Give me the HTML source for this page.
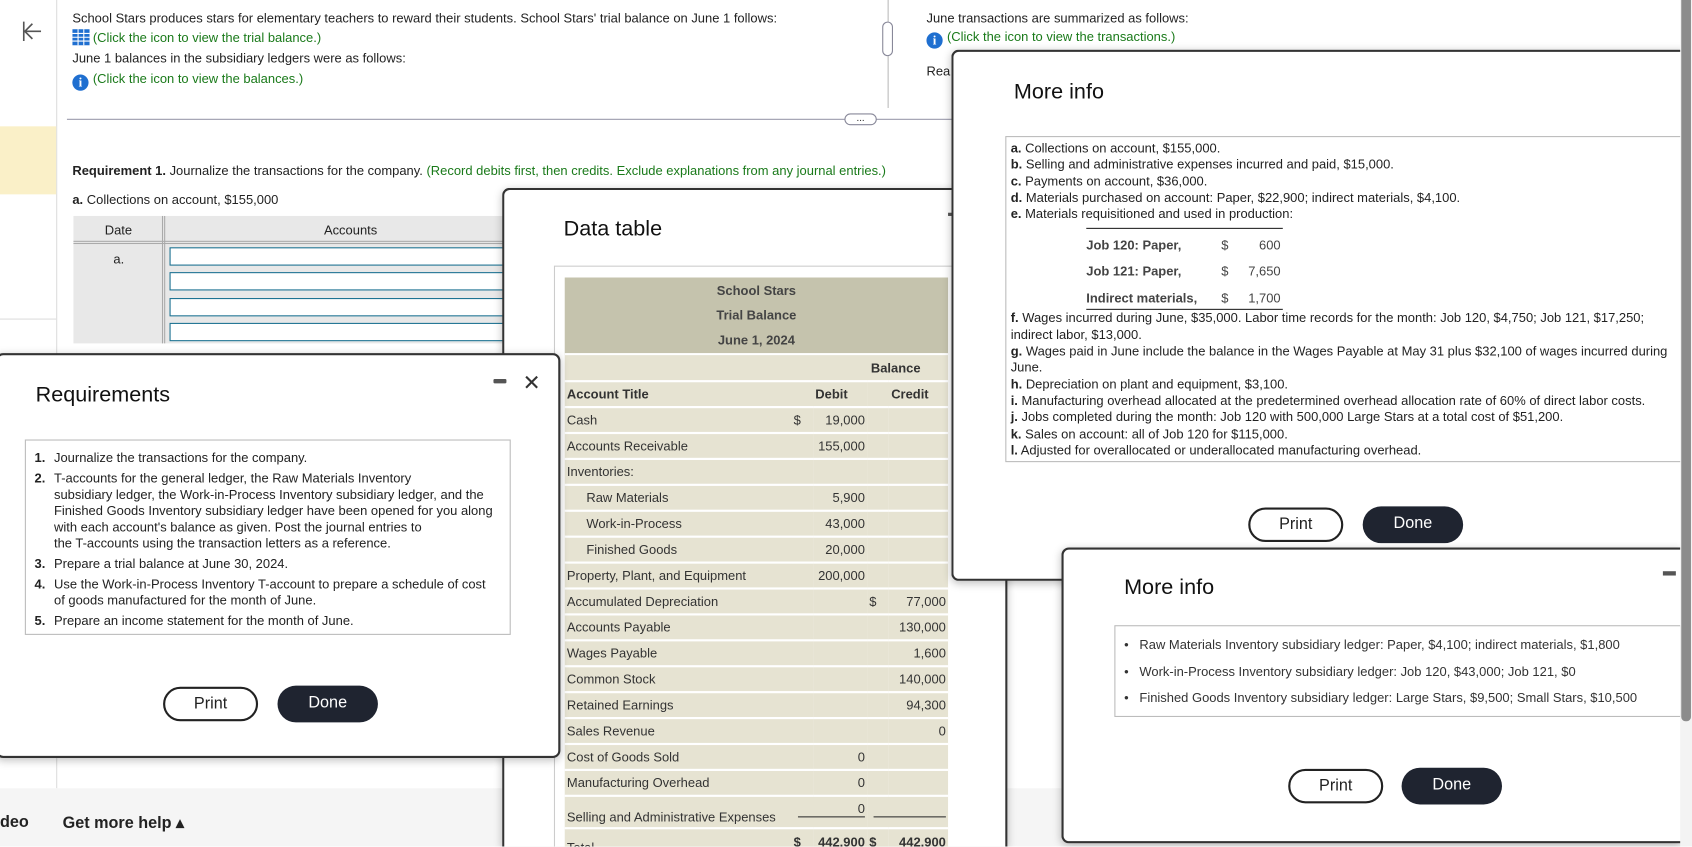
<!DOCTYPE html>
<html><head><meta charset="utf-8"><style>
*{box-sizing:border-box;margin:0;padding:0}
html,body{width:1692px;height:846px;overflow:hidden;background:#fff;font-family:"Liberation Sans",sans-serif;color:#222}
#w{position:absolute;left:0;top:0;width:1567px;height:784px;overflow:hidden;transform:scale(1.0798);transform-origin:0 0}
.a{position:absolute}
.t{font-size:12px;white-space:nowrap}
.g{color:#1a7a1a}
.pop{position:absolute;background:#fff;border:2px solid #333;border-radius:7px;box-shadow:0 2px 8px rgba(0,0,0,.25)}
.h{font-size:20px;color:#111}
.btnp{position:absolute;border:2px solid #222;border-radius:17px;text-align:center;font-size:15px;line-height:28px;color:#222;background:#fff}
.btnd{position:absolute;background:#1f2430;border-radius:17px;text-align:center;font-size:15px;line-height:32px;color:#fff}
.ico{display:inline-block;width:15px;height:15px;border-radius:50%;background:#1f6fd0;color:#fff;font-weight:bold;font-size:12px;text-align:center;line-height:15px;vertical-align:-3px;margin-right:4px;font-family:"Liberation Serif",serif}
table.tb{border-collapse:collapse;font-size:12px;color:#333;width:355px}
table.tb td{height:24px;border-bottom:2px solid #fff;background:#e6e3d2;padding:0 2px;white-space:nowrap}
.r{text-align:right}
</style></head><body><div id="w">
<!-- sidebar -->
<div class="a" style="left:52px;top:0;width:1px;height:730px;background:#ddd"></div>
<div class="a" style="left:0;top:117px;width:52px;height:63px;background:#faf0c8"></div>
<div class="a" style="left:0;top:295px;width:52px;height:1px;background:#ddd"></div>
<svg class="a" style="left:20px;top:18px" width="20" height="22"><path d="M2 2V20M18 11H4M10 4L3 11L10 18" stroke="#555" stroke-width="1.5" fill="none"/></svg>
<div class="a t" style="left:67px;top:10px">School Stars produces stars for elementary teachers to reward their students. School Stars' trial balance on June 1 follows:</div>
<div class="a t g" style="left:67px;top:27px"><svg width="16" height="15" style="vertical-align:-3px;margin-right:3px"><rect x="0" y="0" width="16" height="15" fill="#1f6fd0"/><path d="M0 4H16M0 7.5H16M0 11H16M5.3 0V15M10.6 0V15" stroke="#fff" stroke-width="1"/></svg>(Click the icon to view the trial balance.)</div>
<div class="a t" style="left:67px;top:47px">June 1 balances in the subsidiary ledgers were as follows:</div>
<div class="a t g" style="left:67px;top:66px"><span class="ico">i</span>(Click the icon to view the balances.)</div>
<div class="a" style="left:62px;top:110px;width:1505px;height:1px;background:#99a"></div>
<div class="a" style="left:782px;top:105px;width:30px;height:11px;border:1px solid #889;border-radius:6px;background:#fff;font-size:9px;line-height:7px;text-align:center">...</div>
<div class="a" style="left:822px;top:0;width:1px;height:100px;background:#bbb"></div>
<div class="a" style="left:817px;top:20px;width:10px;height:32px;border:1px solid #889;border-radius:5px;background:#fff"></div>
<div class="a t" style="left:858px;top:10px">June transactions are summarized as follows:</div>
<div class="a t g" style="left:858px;top:27px"><span class="ico">i</span>(Click the icon to view the transactions.)</div>
<div class="a t" style="left:858px;top:59px">Rea</div>
<div class="a t" style="left:67px;top:151px"><b>Requirement 1.</b> Journalize the transactions for the company. <span class="g">(Record debits first, then credits. Exclude explanations from any journal entries.)</span></div>
<div class="a t" style="left:67px;top:178px"><b>a.</b> Collections on account, $155,000</div>
<div class="a" style="left:68px;top:200px;width:410px;height:118px;background:#e8e8e8"></div>
<div class="a" style="left:68px;top:223px;width:410px;height:3px;border-top:1px solid #aaa;border-bottom:1px solid #aaa"></div>
<div class="a" style="left:150px;top:200px;width:3px;height:118px;border-left:1px solid #aaa;border-right:1px solid #aaa"></div>
<div class="a t" style="left:97px;top:206px">Date</div>
<div class="a t" style="left:300px;top:206px">Accounts</div>
<div class="a t" style="left:105px;top:233px">a.</div>
<div class="a" style="left:157px;top:229px;width:320px;height:17px;border:1px solid #1a7090;background:#fff"></div>
<div class="a" style="left:157px;top:252px;width:320px;height:17px;border:1px solid #1a7090;background:#fff"></div>
<div class="a" style="left:157px;top:276px;width:320px;height:17px;border:1px solid #1a7090;background:#fff"></div>
<div class="a" style="left:157px;top:299px;width:320px;height:17px;border:1px solid #1a7090;background:#fff"></div>
<!-- bottom bar -->
<div class="a" style="left:0;top:730px;width:1567px;height:54px;background:#f5f5f5"></div>
<div class="a" style="left:0;top:753px;font-size:15px;font-weight:bold">deo</div>
<div class="a" style="left:58px;top:753px;font-size:15px;font-weight:bold">Get more help ▴</div>
<!-- data table popup -->
<div class="pop" style="left:465px;top:174px;width:468px;height:610px;overflow:hidden;border-bottom:none;border-radius:7px 7px 0 0">
 <div class="a h" style="left:55px;top:25px">Data table</div>
 <div class="a" style="left:46px;top:70px;width:420px;height:560px;border:1px solid #ccc"></div>
 <div class="a" style="left:56px;top:81px">
  <div style="width:355px;height:72px;background:#c5c3ad;border-bottom:2px solid #fff;text-align:center;font-size:12px;font-weight:bold;color:#444;line-height:23px;padding-top:1px">School Stars<br>Trial Balance<br>June 1, 2024</div>
  <table class="tb">
   <tr><td style="width:210px"></td><td colspan="4" style="font-weight:bold;text-align:center;padding-left:50px">Balance</td></tr>
   <tr style="font-weight:bold"><td>Account Title</td><td colspan="2" class="r" style="padding-right:18px">Debit</td><td colspan="2" class="r" style="padding-right:18px">Credit</td></tr>
   <tr><td>Cash</td><td style="width:20px">$</td><td class="r" style="width:50px">19,000</td><td style="width:20px"></td><td class="r">&nbsp;</td></tr>
   <tr><td>Accounts Receivable</td><td></td><td class="r">155,000</td><td></td><td></td></tr>
   <tr><td>Inventories:</td><td></td><td></td><td></td><td></td></tr>
   <tr><td style="padding-left:20px">Raw Materials</td><td></td><td class="r">5,900</td><td></td><td></td></tr>
   <tr><td style="padding-left:20px">Work-in-Process</td><td></td><td class="r">43,000</td><td></td><td></td></tr>
   <tr><td style="padding-left:20px">Finished Goods</td><td></td><td class="r">20,000</td><td></td><td></td></tr>
   <tr><td>Property, Plant, and Equipment</td><td></td><td class="r">200,000</td><td></td><td></td></tr>
   <tr><td>Accumulated Depreciation</td><td></td><td></td><td>$</td><td class="r">77,000</td></tr>
   <tr><td>Accounts Payable</td><td></td><td></td><td></td><td class="r">130,000</td></tr>
   <tr><td>Wages Payable</td><td></td><td></td><td></td><td class="r">1,600</td></tr>
   <tr><td>Common Stock</td><td></td><td></td><td></td><td class="r">140,000</td></tr>
   <tr><td>Retained Earnings</td><td></td><td></td><td></td><td class="r">94,300</td></tr>
   <tr><td>Sales Revenue</td><td></td><td></td><td></td><td class="r">0</td></tr>
   <tr><td>Cost of Goods Sold</td><td></td><td class="r">0</td><td></td><td></td></tr>
   <tr><td>Manufacturing Overhead</td><td></td><td class="r">0</td><td></td><td></td></tr>
   <tr><td style="vertical-align:bottom;height:30px;padding-bottom:2px">Selling and Administrative Expenses</td><td colspan="2" class="r" style="vertical-align:top"><div style="border-bottom:1px solid #333;margin-left:4px;height:19px;padding-top:4px">0</div></td><td colspan="2" style="vertical-align:top"><div style="border-bottom:1px solid #333;margin-left:4px;height:19px"></div></td></tr>
   <tr style="font-weight:bold"><td style="font-weight:normal;vertical-align:top;padding-top:10px">Total</td><td>$</td><td class="r">442,900</td><td>$</td><td class="r">442,900</td></tr>
  </table>
 </div>
 <div class="a" style="left:411px;top:21px;width:6px;height:3px;background:#555"></div>
</div>
<!-- requirements popup -->
<div class="pop" style="left:-4px;top:327px;width:523px;height:375px">
 <div class="a h" style="left:35px;top:26px">Requirements</div>
 <div class="a" style="left:459px;top:22px;width:12px;height:4px;background:#555;border-radius:1px"></div>
 <div class="a" style="left:486px;top:13px;font-size:20px;color:#333">✕</div>
 <div class="a" style="left:25px;top:78px;width:450px;height:181px;border:1px solid #bbb;font-size:12px;line-height:15px;color:#222;padding:9px 0 0 8px;white-space:nowrap">
  <div style="display:flex;margin-bottom:4px"><b style="width:18px">1.</b><span>Journalize the transactions for the company.</span></div>
  <div style="display:flex;margin-bottom:4px"><b style="width:18px;flex:none">2.</b><span>T-accounts for the general ledger, the Raw Materials Inventory<br>subsidiary ledger, the Work-in-Process Inventory subsidiary ledger, and the<br>Finished Goods Inventory subsidiary ledger have been opened for you along<br>with each account's balance as given. Post the journal entries to<br>the T-accounts using the transaction letters as a reference.</span></div>
  <div style="display:flex;margin-bottom:4px"><b style="width:18px">3.</b><span>Prepare a trial balance at June 30, 2024.</span></div>
  <div style="display:flex;margin-bottom:4px"><b style="width:18px;flex:none">4.</b><span>Use the Work-in-Process Inventory T-account to prepare a schedule of cost<br>of goods manufactured for the month of June.</span></div>
  <div style="display:flex"><b style="width:18px">5.</b><span>Prepare an income statement for the month of June.</span></div>
 </div>
 <div class="btnp" style="left:153px;top:307px;width:88px;height:32px">Print</div>
 <div class="btnd" style="left:259px;top:306px;width:93px;height:34px">Done</div>
</div>
<!-- more info 1 -->
<div class="pop" style="left:881px;top:46px;width:680px;height:492px;border-right:none;border-radius:7px 0 0 7px">
 <div class="a h" style="left:56px;top:26px">More info</div>
 <div class="a" style="left:48px;top:78px;width:640px;height:302px;border:1px solid #bbb;font-size:12px;line-height:15.3px;color:#222;padding:3px 0 0 4px;white-space:nowrap">
  <div><b>a.</b> Collections on account, $155,000.</div>
  <div><b>b.</b> Selling and administrative expenses incurred and paid, $15,000.</div>
  <div><b>c.</b> Payments on account, $36,000.</div>
  <div><b>d.</b> Materials purchased on account: Paper, $22,900; indirect materials, $4,100.</div>
  <div><b>e.</b> Materials requisitioned and used in production:</div>
  <div style="margin:5px 0 0 70px;width:182px;border-top:1px solid #222;border-bottom:1px solid #222;font-size:12px;color:#444;line-height:24px;padding-top:3px">
   <div style="display:flex"><b style="width:125px">Job 120: Paper,</b><span style="width:15px">$</span><span style="width:40px;text-align:right">600</span></div>
   <div style="display:flex"><b style="width:125px">Job 121: Paper,</b><span style="width:15px">$</span><span style="width:40px;text-align:right">7,650</span></div>
   <div style="display:flex;line-height:18px;padding-bottom:1px;margin-top:4px"><b style="width:125px">Indirect materials,</b><span style="width:15px">$</span><span style="width:40px;text-align:right">1,700</span></div>
  </div>
  <div><b>f.</b> Wages incurred during June, $35,000. Labor time records for the month: Job 120, $4,750; Job 121, $17,250;<br>indirect labor, $13,000.</div>
  <div><b>g.</b> Wages paid in June include the balance in the Wages Payable at May 31 plus $32,100 of wages incurred during<br>June.</div>
  <div><b>h.</b> Depreciation on plant and equipment, $3,100.</div>
  <div><b>i.</b> Manufacturing overhead allocated at the predetermined overhead allocation rate of 60% of direct labor costs.</div>
  <div><b>j.</b> Jobs completed during the month: Job 120 with 500,000 Large Stars at a total cost of $51,200.</div>
  <div><b>k.</b> Sales on account: all of Job 120 for $115,000.</div>
  <div><b>l.</b> Adjusted for overallocated or underallocated manufacturing overhead.</div>
 </div>
 <div class="btnp" style="left:273px;top:422px;width:88px;height:32px">Print</div>
 <div class="btnd" style="left:379px;top:421px;width:93px;height:34px">Done</div>
</div>
<!-- more info 2 -->
<div class="pop" style="left:983px;top:507px;width:574px;height:274px;border-right:none;border-radius:7px 0 0 7px">
 <div class="a h" style="left:56px;top:24px">More info</div>
 <div class="a" style="left:555px;top:20px;width:12px;height:4px;background:#555"></div>
 <div class="a" style="left:47px;top:70px;width:525px;height:85px;border:1px solid #bbb;font-size:12px;color:#333;line-height:24.5px;padding:5px 0 0 8px;white-space:nowrap">
  <div>•&nbsp;&nbsp;&nbsp;Raw Materials Inventory subsidiary ledger: Paper, $4,100; indirect materials, $1,800</div>
  <div>•&nbsp;&nbsp;&nbsp;Work-in-Process Inventory subsidiary ledger: Job 120, $43,000; Job 121, $0</div>
  <div>•&nbsp;&nbsp;&nbsp;Finished Goods Inventory subsidiary ledger: Large Stars, $9,500; Small Stars, $10,500</div>
 </div>
 <div class="btnp" style="left:208px;top:203px;width:88px;height:32px">Print</div>
 <div class="btnd" style="left:313px;top:202px;width:93px;height:34px">Done</div>
</div>
<!-- scrollbar -->
<div class="a" style="left:1556px;top:0;width:11px;height:784px;background:#f3f3f3"></div>
<div class="a" style="left:1557px;top:0;width:9px;height:668px;background:#8c8c8c;border-radius:0 0 4px 4px"></div>
</div></body></html>
